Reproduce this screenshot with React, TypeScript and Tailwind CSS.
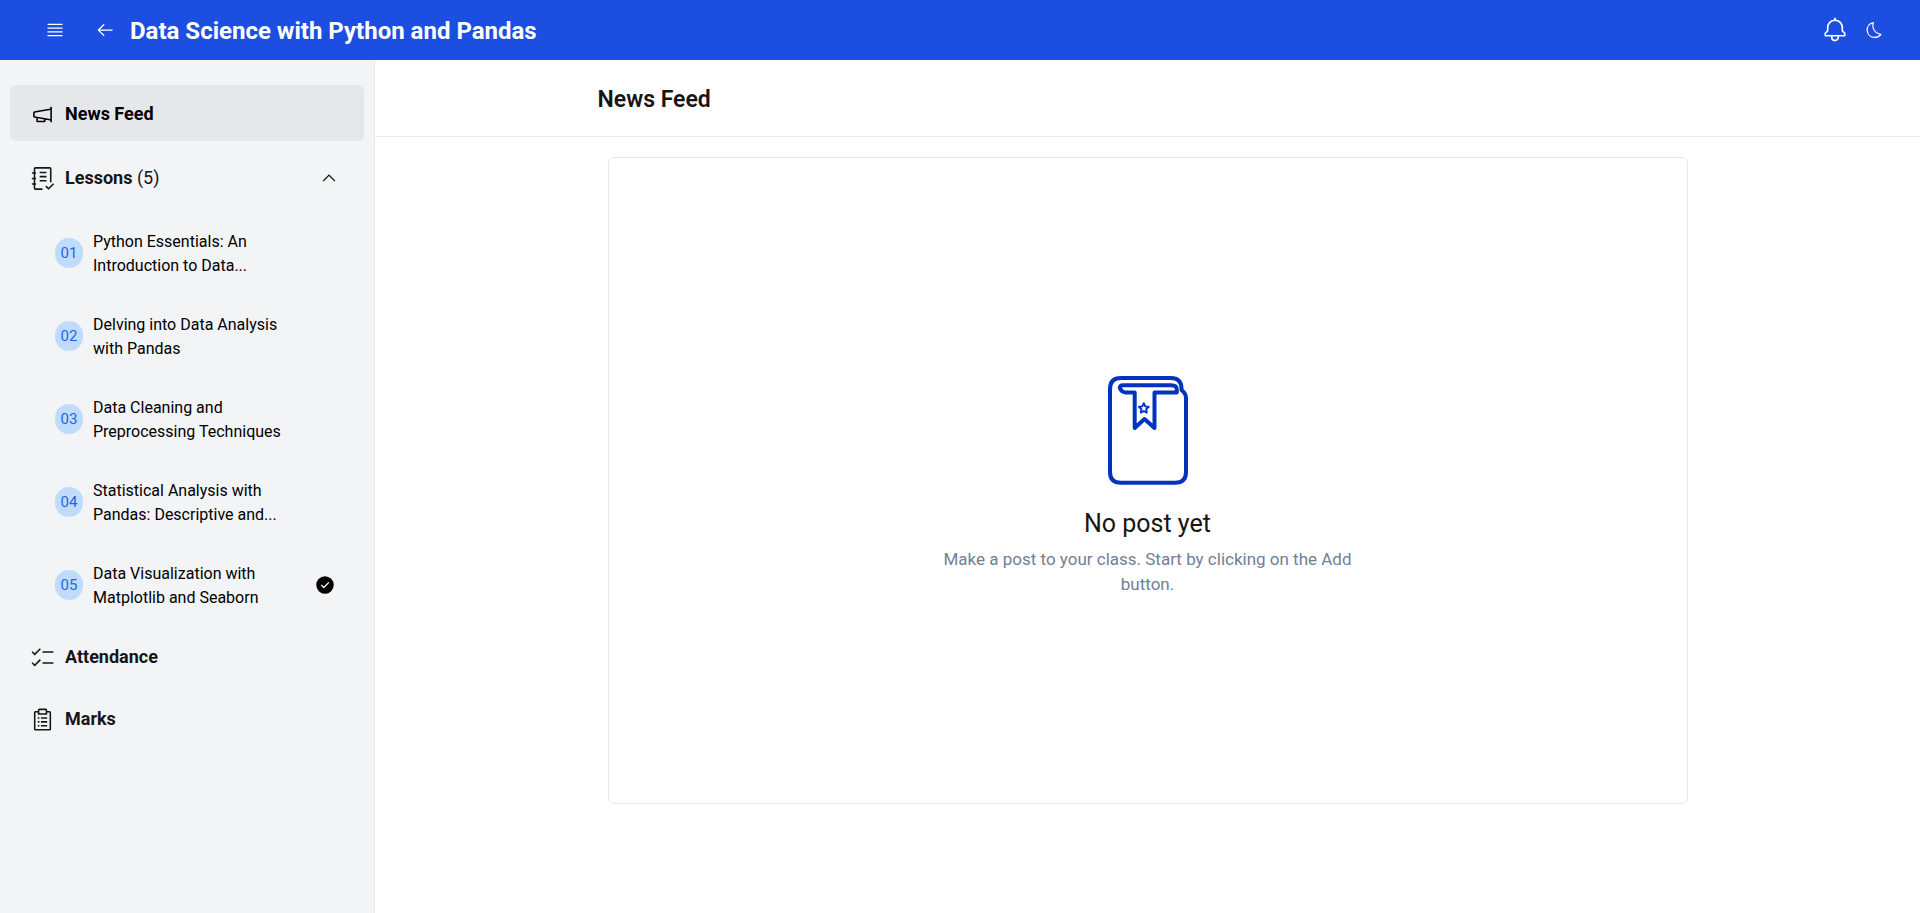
import type { ReactNode } from "react";

type IconProps = { className?: string; children: ReactNode };

function Icon({ className, children }: IconProps) {
  return (
    <svg viewBox="0 0 32 32" fill="currentColor" aria-hidden="true" className={className}>
      {children}
    </svg>
  );
}

const lessons = [
  { title: "Python Essentials: An Introduction to Data...", done: false },
  { title: "Delving into Data Analysis with Pandas", done: false },
  { title: "Data Cleaning and Preprocessing Techniques", done: false },
  { title: "Statistical Analysis with Pandas: Descriptive and...", done: false },
  { title: "Data Visualization with Matplotlib and Seaborn", done: true },
];

function TopBar() {
  return (
    <header className="flex h-[60px] shrink-0 items-center bg-[#1d4ee2] pl-[45px] pr-9 text-white">
      <button type="button" aria-label="Menu" className="mr-[30px]">
        <Icon className="size-5">
          <path d="M4 6H28V8H4zM4 24H28V26H4zM4 12H28V14H4zM4 18H28V20H4z" />
        </Icon>
      </button>
      <a href="#courses" aria-label="Back">
        <Icon className="size-5">
          <path d="M14 26 15.41 24.59 7.83 17 28 17 28 15 7.83 15 15.41 7.41 14 6 4 16 14 26z" />
        </Icon>
      </a>
      <h1 className="ml-[15px] pt-0.5 text-2xl font-bold">Data Science with Python and Pandas</h1>
      <div className="ml-auto flex items-center gap-4">
        <button type="button" aria-label="Notifications">
          <Icon className="size-[26px]">
            <path d="M28.7071,19.293,26,16.5859V13a10.0136,10.0136,0,0,0-9-9.9492V1H15V3.0508A10.0136,10.0136,0,0,0,6,13v3.5859L3.2929,19.293A1,1,0,0,0,3,20v3a1,1,0,0,0,1,1h7v.7768a5.152,5.152,0,0,0,4.5,5.1987A5.0057,5.0057,0,0,0,21,25V24h7a1,1,0,0,0,1-1V20A1,1,0,0,0,28.7071,19.293ZM19,25a3,3,0,0,1-6,0V24h6Zm8-3H5V20.4141L7.707,17.707A1,1,0,0,0,8,17V13a8,8,0,0,1,16,0v4a1,1,0,0,0,.293.707L27,20.4141Z" />
          </Icon>
        </button>
        <button type="button" aria-label="Dark mode">
          <Icon className="size-5">
            <path d="M13.5025,5.4136A15.0755,15.0755,0,0,0,25.096,23.6082a11.1134,11.1134,0,0,1-7.9749,3.3893c-.1385,0-.2782.0051-.4178,0A11.0944,11.0944,0,0,1,13.5025,5.4136M14.98,3a1.0024,1.0024,0,0,0-.1746.0156A13.0959,13.0959,0,0,0,16.63,28.9973c.1641.006.3282,0,.4909,0a13.0724,13.0724,0,0,0,10.702-5.5556,1.0094,1.0094,0,0,0-.7833-1.5644A13.08,13.08,0,0,1,15.8892,4.38,1.0149,1.0149,0,0,0,14.98,3Z" />
          </Icon>
        </button>
      </div>
    </header>
  );
}

function Sidebar() {
  return (
    <nav
      aria-label="Course"
      className="w-[375px] shrink-0 border-r border-gray-200 bg-[#f3f4f6] px-2.5 pt-[25px] text-lg text-[#161616]"
    >
      <a
        href="#news-feed"
        aria-current="page"
        className="mb-1.5 flex h-14 items-center gap-2.5 rounded-md bg-[#e5e7eb] px-5 pt-0.5 font-bold text-black"
      >
        <Icon className="size-[25px]">
          <path d="M26,6V8.17L5.64,11.87A2,2,0,0,0,4,13.83v4.34a2,2,0,0,0,1.64,2L8,20.56V24a2,2,0,0,0,2,2h8a2,2,0,0,0,2-2V22.74l6,1.09V26h2V6ZM18,24H10V20.93l8,1.45ZM6,18.17V13.83L26,10.2V21.8Z" />
        </Icon>
        News Feed
      </a>

      <button
        type="button"
        aria-expanded="true"
        className="flex h-[62px] w-full items-center gap-2.5 pl-5 pr-[25px]"
      >
        <svg
          viewBox="0 0 24 24"
          fill="none"
          stroke="currentColor"
          strokeWidth="1.5"
          strokeLinejoin="round"
          aria-hidden="true"
          className="size-[25px]"
        >
          <path d="M12 22.2H5.2Q4.3 22.2 4.3 21.3V2.7Q4.3 1.8 5.2 1.8H19Q19.9 1.8 19.9 2.7V15.5" />
          <path d="M1.8 6.8H5.8M1.8 12H5.8M1.8 17.2H5.8M9.3 6.2H15.8M9.3 10.2H15.8M9.3 14.2H15.8" />
          <path d="M15.2 19.3L17.8 21.9L22.6 17.1" />
        </svg>
        <span>
          <strong className="font-bold">Lessons</strong> (5)
        </span>
        <Icon className="ml-auto size-5">
          <path d="M16 10 26 20 24.6 21.4 16 12.8 7.4 21.4 6 20z" />
        </Icon>
      </button>

      <ol className="pt-0.5">
        {lessons.map((lesson, i) => (
          <li key={lesson.title}>
            <a
              href={`#lesson-${i + 1}`}
              className="flex h-[83px] items-center pl-[45px] pr-[29px] text-base text-black"
            >
              <span className="flex h-[30px] w-7 shrink-0 items-center justify-center rounded-full bg-[#bfdbfe] pt-0.5 text-[15px] text-[#2563eb]">
                0{i + 1}
              </span>
              <span className="ml-2.5 w-[200px] pt-0.5">{lesson.title}</span>
              {lesson.done && (
                <Icon className="ml-auto size-5">
                  <path
                    fillRule="evenodd"
                    d="M16,2A14,14,0,1,0,30,16,14,14,0,0,0,16,2ZM14,21.5908l-5-5L10.5906,15,14,18.4092,21.41,11l1.5957,1.5859Z"
                  />
                </Icon>
              )}
            </a>
          </li>
        ))}
      </ol>

      <a href="#attendance" className="flex h-[62px] items-center gap-2.5 px-5 font-bold">
        <Icon className="size-[25px]">
          <path d="M16 8H30V10H16zM6 10.59 3.41 8 2 9.41 6 13.41 14 5.41 12.59 4 6 10.59zM16 22H30V24H16zM6 24.59 3.41 22 2 23.41 6 27.41 14 19.41 12.59 18 6 24.59z" />
        </Icon>
        Attendance
      </a>
      <a href="#marks" className="flex h-[62px] items-center gap-2.5 px-5 font-bold">
        <Icon className="size-[25px]">
          <path d="M25,5H22V4a2,2,0,0,0-2-2H12a2,2,0,0,0-2,2V5H7A2,2,0,0,0,5,7V28a2,2,0,0,0,2,2H25a2,2,0,0,0,2-2V7A2,2,0,0,0,25,5ZM12,4h8V8H12ZM25,28H7V7h3v3H22V7h3Z" />
          <path d="M10 13H12V15H10zM14 13H22V15H14zM10 18H12V20H10zM14 18H22V20H14zM10 23H12V25H10zM14 23H22V25H14z" />
        </Icon>
        Marks
      </a>
    </nav>
  );
}

function NotebookDrawing() {
  return (
    <svg
      viewBox="28 16 80 110"
      fill="none"
      stroke="#0233bd"
      strokeWidth="4"
      strokeLinejoin="round"
      strokeLinecap="round"
      aria-hidden="true"
      className="h-[110px] w-20"
    >
      <path d="M101.5 30V28Q101 18 91 18H41Q30 18 30 29V112Q30 122.7 41 122.7H95Q106 122.7 106 112V38Q106 33.5 101.5 30" />
      <path d="M54.7 32.5H45.5Q41.5 32 39.8 28Q39.5 25.2 43 25.2H91Q96.8 25.2 96.8 29.5V32.5H74.5V68L64.5 59L54.7 68V32.5Z" />
      <path
        strokeWidth="1.9"
        d="M63.8 43.2L65.3 46.4L68.7 46.8L66.2 49.2L66.8 52.6L63.8 51L60.8 52.6L61.4 49.2L58.9 46.8L62.3 46.4Z"
      />
    </svg>
  );
}

export default function App() {
  return (
    <div className="flex min-h-screen flex-col bg-white font-[Roboto,'Liberation_Sans',sans-serif] text-[#161616]">
      <TopBar />
      <div className="flex flex-1">
        <Sidebar />
        <main className="flex min-w-0 flex-1 flex-col">
          <div className="border-b border-gray-200">
            <div className="mx-auto flex h-[76px] w-full max-w-[1100px] items-center pt-1">
              <h2 className="text-[23px] font-semibold">News Feed</h2>
            </div>
          </div>
          <div className="mx-auto flex w-full max-w-[1100px] flex-1 flex-col px-2.5 pb-[109px] pt-5">
            <section className="flex flex-1 flex-col items-center justify-center rounded-md border border-gray-200 pt-3 text-center">
              <NotebookDrawing />
              <h3 className="mt-[22px] text-[25px] leading-8">No post yet</h3>
              <p className="mt-[7px] max-w-md text-[17px] leading-[25px] text-[#718096]">
                Make a post to your class. Start by clicking on the Add button.
              </p>
            </section>
          </div>
        </main>
      </div>
    </div>
  );
}
